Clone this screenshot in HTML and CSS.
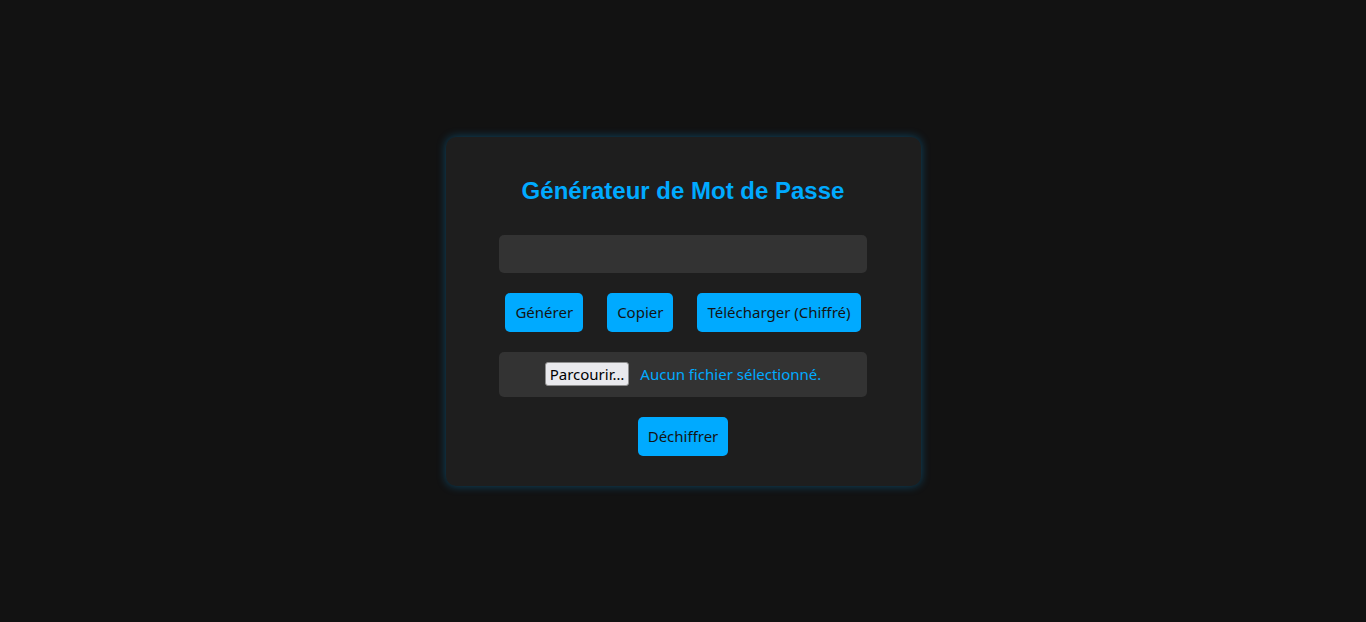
FILE: index.html
```html
<!DOCTYPE html>
<html lang="fr">
<head>
<meta charset="utf-8">
<title>Générateur de Mot de Passe</title>
<link rel="stylesheet" href="styles.css">
</head>
<body>
  <div class="card">
    <h2 class="title">Générateur de Mot de Passe</h2>
    <input class="password" type="text" readonly>
    <div class="actions">
      <button class="btn">Générer</button>
      <button class="btn">Copier</button>
      <button class="btn">Télécharger (Chiffré)</button>
    </div>
    <label class="file">
      <span class="file-btn">Parcourir…</span>
      <span class="file-name">Aucun fichier sélectionné.</span>
    </label>
    <button class="btn">Déchiffrer</button>
  </div>
</body>
</html>
```
FILE: styles.css
```css
html, body {
  margin: 0;
  height: 100%;
}
body {
  background: #121212;
  display: flex;
  align-items: center;
  justify-content: center;
  font-family: "Noto Sans", "DejaVu Sans", sans-serif;
}
.card {
  width: 435px;
  padding: 20px;
  background: #1e1e1e;
  border-radius: 10px;
  box-shadow: 0 0 10px rgba(0, 170, 255, 0.35);
  display: flex;
  flex-direction: column;
  align-items: center;
}
.title {
  margin: 20px 0 20px;
  font-family: "Liberation Sans", Arial, sans-serif;
  font-size: 24px;
  font-weight: bold;
  line-height: 28px;
  color: #00aaff;
}
.password {
  box-sizing: border-box;
  width: 368px;
  height: 38px;
  margin: 10px 0;
  border: none;
  border-radius: 5px;
  background: #333333;
  color: #fff;
  outline: none;
}
.actions {
  display: flex;
  gap: 24px;
  margin: 10px 0;
}
.btn {
  height: 39px;
  padding: 0 10px;
  border: none;
  border-radius: 5px;
  background: #00aaff;
  color: #141414;
  font-family: "Noto Sans", "DejaVu Sans", sans-serif;
  font-size: 15px;
  cursor: pointer;
}
.file {
  box-sizing: border-box;
  width: 368px;
  height: 45px;
  margin: 10px 0 20px;
  border-radius: 5px;
  background: #333333;
  display: flex;
  align-items: center;
  justify-content: center;
  gap: 11px;
}
.file-btn {
  box-sizing: border-box;
  height: 24px;
  padding: 0 4px;
  border: 1px solid #8f8f8f;
  border-radius: 3px;
  background: #e9e9ed;
  color: #000;
  font-size: 15px;
  line-height: 22px;
}
.file-name {
  color: #00aaff;
  font-size: 15px;
}
.card > .btn {
  margin-bottom: 10px;
}
```
